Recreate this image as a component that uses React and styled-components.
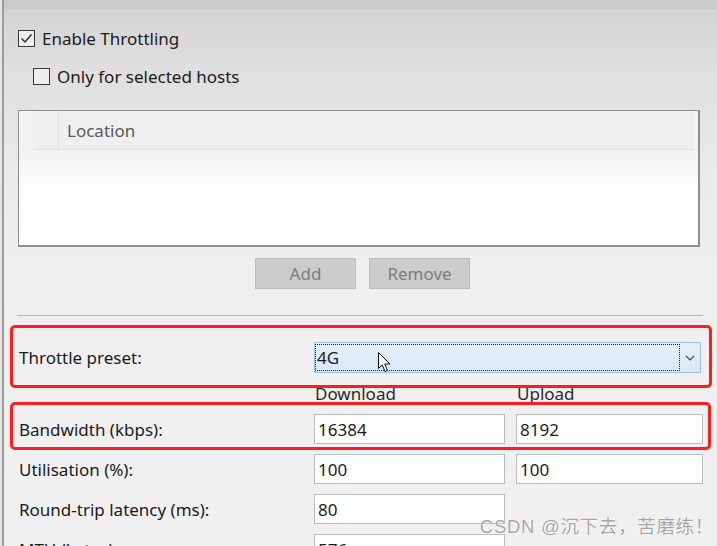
import React from 'react';
import styled, { createGlobalStyle, css } from 'styled-components';

const GlobalStyle = createGlobalStyle`
  html, body {
    margin: 0;
    padding: 0;
    background: #e4e4e4;
    overflow: hidden;
  }
  * { box-sizing: border-box; }
`;

const FONT = `"Noto Sans", "Open Sans", "Noto Sans CJK SC", sans-serif`;

const Window = styled.div`
  position: relative;
  width: 717px;
  height: 546px;
  overflow: hidden;
  padding-left: 2px;
  background: #e6e6e6;
  font-family: ${FONT};
  font-size: 17px;
  color: #1b1b1b;
`;

const Pane = styled.div`
  height: 100%;
  border-left: 2px solid #9c9c9c;
  display: flex;
  flex-direction: column;
  background: linear-gradient(#cbcbcb 0, #cbcbcb 9px, #d3d3d3 10px, #dedede 60px, #e9e9e9 160px, #efefef 260px, #f0f0f0 100%);
`;

const Content = styled.div`
  padding: 28px 0 0 14px;
  display: flex;
  flex-direction: column;
`;

const CheckRow = styled.label`
  display: flex;
  align-items: center;
  gap: 7px;
  height: 20px;
  margin-left: ${p => p.$indent || 0}px;
  margin-bottom: ${p => p.$after || 0}px;
  white-space: nowrap;
`;

const Box = styled.span`
  width: 17px;
  height: 17px;
  border: 1px solid #3a3a3a;
  background: #eeeeee;
  display: flex;
  align-items: center;
  justify-content: center;
`;

const Table = styled.div`
  width: 682px;
  height: 137px;
  border: 1px solid #8e8e8e;
  border-right-width: 2px;
  border-bottom-width: 2px;
  display: flex;
  flex-direction: column;
  background: linear-gradient(#f3f3f3 0, #f3f3f3 40px, #fbfbfb 70px, #ffffff 90px);
`;

const TableHead = styled.div`
  display: flex;
  height: 39px;
  margin: 0 4px 0 14px;
  border-bottom: 1px solid #e3e3e3;
  background: #efefef;
`;

const HeadCorner = styled.div`
  width: 26px;
  border-right: 1px solid #dedede;
`;

const HeadCell = styled.div`
  flex: 1;
  display: flex;
  align-items: center;
  padding-left: 8px;
  color: #5a5a5a;
`;

const ButtonBar = styled.div`
  display: flex;
  gap: 13px;
  margin: 11px 0 0 237px;
`;

const Button = styled.button`
  width: 101px;
  height: 31px;
  background: #cccccc;
  border: 1px solid #bdbdbd;
  color: #7c7c7c;
  font-family: ${FONT};
  font-size: 17px;
  padding: 0;
`;

const Separator = styled.hr`
  width: 686px;
  height: 1px;
  border: 0;
  background: #b9b9b9;
  margin: 26px 0 0 -1px;
`;

const Form = styled.div`
  display: flex;
  flex-direction: column;
  align-items: flex-start;
  gap: 10px;
  margin: 26px 0 0 1px;
`;

const Field = styled.div`
  position: relative;
  display: grid;
  grid-template-columns: 284px 191px 187px;
  column-gap: 11px;
  width: max-content;
  height: ${p => p.$h || 30}px;
  align-items: center;

  ${p => p.$mark && css`
    &::after {
      content: '';
      position: absolute;
      top: ${p.$mark[0]}px;
      bottom: ${p.$mark[1]}px;
      left: -9px;
      right: ${p.$mark[2]}px;
      border: 3px solid #ff1d1d;
      border-radius: 5px;
      pointer-events: none;
      z-index: 2;
    }
  `}
`;

const Label = styled.span`
  white-space: nowrap;
`;

const ColHead = styled.span`
  align-self: end;
  line-height: 20px;
  padding-left: 1px;
  color: #2a2a2a;
`;

const Input = styled.div`
  height: 30px;
  background: #ffffff;
  border: 1px solid #bcbcbc;
  padding-left: 3px;
  display: flex;
  align-items: center;
`;

const Select = styled.div`
  position: relative;
  grid-column: 2 / 4;
  width: 387px;
  height: 31px;
  display: flex;
  border: 1px solid #9ec1e3;
  background: linear-gradient(#e4f0fa, #d9e8f5);
`;

const SelectValue = styled.div`
  flex: 1;
  margin: 1px 0;
  border: 1px dotted #222;
  display: flex;
  align-items: center;
  padding-left: 1px;
`;

const SelectArrow = styled.div`
  width: 20px;
  display: flex;
  align-items: center;
  justify-content: center;
`;

const Pointer = styled.svg`
  position: absolute;
  left: 63px;
  top: 9px;
  z-index: 3;
`;

const Watermark = styled.div`
  position: absolute;
  right: 3px;
  bottom: 8px;
  font-family: "Liberation Sans", "Noto Sans CJK SC", sans-serif;
  font-size: 18.5px;
  letter-spacing: 0.7px;
  color: rgba(150, 150, 150, 0.85);
  text-shadow: 0 0 1px #fff, 0 0 2px #fff;
  z-index: 4;
`;

const Check = () => (
  <svg width="13" height="11" viewBox="0 0 13 11">
    <path d="M1.5 5.5 L5 9 L11.5 1.5" fill="none" stroke="#2a2a2a" strokeWidth="1.4" />
  </svg>
);

const Chevron = () => (
  <svg width="10" height="6" viewBox="0 0 10 6">
    <path d="M1 1 L5 5 L9 1" fill="none" stroke="#444" strokeWidth="1.1" />
  </svg>
);

const Cursor = () => (
  <Pointer width="13" height="22" viewBox="0 0 13 22">
    <path
      d="M0.5 0.5 L0.5 16.5 L4.3 12.9 L7 19.5 L9.4 18.5 L6.8 12 L12 12 Z"
      fill="#fff"
      stroke="#111"
      strokeWidth="1"
      strokeLinejoin="round"
    />
  </Pointer>
);

const rows = [
  { label: 'Utilisation (%):', down: '100', up: '100' },
  { label: 'Round-trip latency (ms):', down: '80' },
  { label: 'MTU (bytes):', down: '576' },
];

export default function App() {
  return (
    <>
      <GlobalStyle />
      <Window>
        <Pane>
          <Content>
            <CheckRow $after={18}>
              <Box><Check /></Box>
              Enable Throttling
            </CheckRow>
            <CheckRow $indent={15} $after={24}>
              <Box />
              Only for selected hosts
            </CheckRow>

            <Table>
              <TableHead>
                <HeadCorner />
                <HeadCell>Location</HeadCell>
              </TableHead>
            </Table>

            <ButtonBar>
              <Button>Add</Button>
              <Button>Remove</Button>
            </ButtonBar>

            <Separator />

            <Form>
              <Field $mark={[-17, -16, -9]}>
                <Label>Throttle preset:</Label>
                <Select>
                  <SelectValue>4G</SelectValue>
                  <SelectArrow><Chevron /></SelectArrow>
                  <Cursor />
                </Select>
              </Field>

              <Field $h={22}>
                <span />
                <ColHead>Download</ColHead>
                <ColHead>Upload</ColHead>
              </Field>

              <Field $mark={[-12, -6, -8]}>
                <Label>Bandwidth (kbps):</Label>
                <Input>16384</Input>
                <Input>8192</Input>
              </Field>

              {rows.map(r => (
                <Field key={r.label}>
                  <Label>{r.label}</Label>
                  <Input>{r.down}</Input>
                  {r.up ? <Input>{r.up}</Input> : <span />}
                </Field>
              ))}
            </Form>
          </Content>
        </Pane>
        <Watermark>CSDN @沉下去，苦磨练！</Watermark>
      </Window>
    </>
  );
}
